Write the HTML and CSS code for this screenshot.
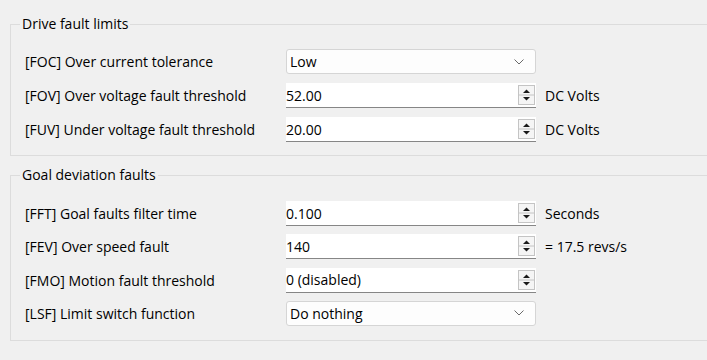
FILE: index.html
```html
<!DOCTYPE html>
<html lang="en">
<head>
  <meta charset="UTF-8" />
  <title>Fault settings</title>
  <link rel="stylesheet" href="styles.css">
</head>
<body>
  <div class="page">
    <fieldset class="group">
      <legend>Drive fault limits</legend>
      <div class="rows">
        <span class="label">[FOC] Over current tolerance</span>
        <div class="combo">
          <span>Low</span>
          <svg class="chevron" width="10" height="6" viewBox="0 0 10 6"><polyline points="0.5,0.5 5,5 9.5,0.5" /></svg>
        </div>
        <span class="unit"></span>

        <span class="label">[FOV] Over voltage fault threshold</span>
        <div class="spin">
          <span>52.00</span>
          <svg class="arrows" width="17" height="20" viewBox="0 0 17 20"><rect x="0.5" y="0.5" width="16" height="19" /><line x1="1" y1="10" x2="16" y2="10" /><polygon points="8.5,4.5 5,8 12,8" /><polygon points="5,12 12,12 8.5,15.5" /></svg>
        </div>
        <span class="unit">DC Volts</span>

        <span class="label">[FUV] Under voltage fault threshold</span>
        <div class="spin">
          <span>20.00</span>
          <svg class="arrows" width="17" height="20" viewBox="0 0 17 20"><rect x="0.5" y="0.5" width="16" height="19" /><line x1="1" y1="10" x2="16" y2="10" /><polygon points="8.5,4.5 5,8 12,8" /><polygon points="5,12 12,12 8.5,15.5" /></svg>
        </div>
        <span class="unit">DC Volts</span>
      </div>
    </fieldset>

    <fieldset class="group second">
      <legend>Goal deviation faults</legend>
      <div class="rows tight">
        <span class="label">[FFT] Goal faults filter time</span>
        <div class="spin">
          <span>0.100</span>
          <svg class="arrows" width="17" height="20" viewBox="0 0 17 20"><rect x="0.5" y="0.5" width="16" height="19" /><line x1="1" y1="10" x2="16" y2="10" /><polygon points="8.5,4.5 5,8 12,8" /><polygon points="5,12 12,12 8.5,15.5" /></svg>
        </div>
        <span class="unit">Seconds</span>

        <span class="label">[FEV] Over speed fault</span>
        <div class="spin">
          <span>140</span>
          <svg class="arrows" width="17" height="20" viewBox="0 0 17 20"><rect x="0.5" y="0.5" width="16" height="19" /><line x1="1" y1="10" x2="16" y2="10" /><polygon points="8.5,4.5 5,8 12,8" /><polygon points="5,12 12,12 8.5,15.5" /></svg>
        </div>
        <span class="unit">= 17.5 revs/s</span>

        <span class="label">[FMO] Motion fault threshold</span>
        <div class="spin">
          <span>0 (disabled)</span>
          <svg class="arrows" width="17" height="20" viewBox="0 0 17 20"><rect x="0.5" y="0.5" width="16" height="19" /><line x1="1" y1="10" x2="16" y2="10" /><polygon points="8.5,4.5 5,8 12,8" /><polygon points="5,12 12,12 8.5,15.5" /></svg>
        </div>
        <span class="unit"></span>

        <span class="label">[LSF] Limit switch function</span>
        <div class="combo">
          <span>Do nothing</span>
          <svg class="chevron" width="10" height="6" viewBox="0 0 10 6"><polyline points="0.5,0.5 5,5 9.5,0.5" /></svg>
        </div>
        <span class="unit"></span>
      </div>
    </fieldset>
  </div>
</body>
</html>
```

FILE: styles.css
```css
body {
  margin: 0;
  background: #f0f0f0;
  color: #000;
  font-family: "Segoe UI", "Open Sans", sans-serif;
  font-size: 14px;
  overflow: hidden;
}
.page {
  padding: 14px 0 0 10px;
}
.group {
  margin: 0 -20px 0 0;
  padding: 0 0 13px 0;
  border: 1px solid #dcdcdc;
}
.group.second {
  margin-top: 9px;
  padding-bottom: 14px;
}
legend {
  margin-left: 9px;
  padding: 0 2px;
  line-height: 20px;
}
.rows {
  display: grid;
  grid-template-columns: 252px 250px auto;
  grid-auto-rows: 25px;
  column-gap: 9px;
  row-gap: 9px;
  align-items: center;
  padding: 15px 0 0 14px;
}
.rows.tight {
  row-gap: 8.3px;
  padding-top: 16px;
}
.combo {
  box-sizing: border-box;
  height: 25px;
  display: flex;
  align-items: center;
  justify-content: space-between;
  padding: 0 11px 0 3px;
  background: #fdfdfd;
  border: 1px solid #d5d5d5;
  border-radius: 3px;
}
.chevron polyline {
  fill: none;
  stroke: #6a6a6a;
  stroke-width: 1;
}
.spin {
  box-sizing: border-box;
  height: 25px;
  display: flex;
  align-items: center;
  justify-content: space-between;
  padding: 0 1px 0 0;
  background: #fff;
  border-bottom: 1px solid #868686;
}
.arrows rect {
  fill: #f5f5f5;
  stroke: #c4c4c4;
}
.arrows line {
  stroke: #c4c4c4;
}
.arrows polygon {
  fill: #1a1a1a;
}
```
